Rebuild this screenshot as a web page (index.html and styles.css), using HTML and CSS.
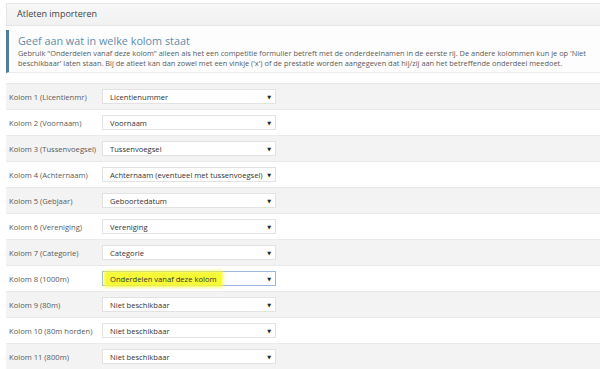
FILE: index.html
```html
<!DOCTYPE html>
<html lang="nl">
<head>
    <meta charset="UTF-8">
    <meta name="viewport" content="width=device-width, initial-scale=1.0">
    <title>Atleten importeren</title>
    <link rel="stylesheet" href="styles.css">
</head>
<body>
    <div class="panel">
        <div class="panel-heading">Atleten importeren</div>

        <div class="callout">
            <h4>Geef aan wat in welke kolom staat</h4>
            <p>Gebruik "Onderdelen vanaf deze kolom" alleen als het een competitie formulier betreft met de onderdeelnamen in de eerste rij. De andere kolommen kun je op 'Niet beschikbaar' laten staan. Bij de atleet kan dan zowel met een vinkje ('x') of de prestatie worden aangegeven dat hij/zij aan het betreffende onderdeel meedoet.</p>
        </div>

        <div class="columns">
            <div class="row">
                <label>Kolom 1 (Licentienmr)</label>
                <div class="select"><span>Licentienummer</span><span class="caret">&#9660;</span></div>
            </div>
            <div class="row">
                <label>Kolom 2 (Voornaam)</label>
                <div class="select"><span>Voornaam</span><span class="caret">&#9660;</span></div>
            </div>
            <div class="row">
                <label>Kolom 3 (Tussenvoegsel)</label>
                <div class="select"><span>Tussenvoegsel</span><span class="caret">&#9660;</span></div>
            </div>
            <div class="row">
                <label>Kolom 4 (Achternaam)</label>
                <div class="select"><span>Achternaam (eventueel met tussenvoegsel)</span><span class="caret">&#9660;</span></div>
            </div>
            <div class="row">
                <label>Kolom 5 (Gebjaar)</label>
                <div class="select"><span>Geboortedatum</span><span class="caret">&#9660;</span></div>
            </div>
            <div class="row">
                <label>Kolom 6 (Vereniging)</label>
                <div class="select"><span>Vereniging</span><span class="caret">&#9660;</span></div>
            </div>
            <div class="row">
                <label>Kolom 7 (Categorie)</label>
                <div class="select"><span>Categorie</span><span class="caret">&#9660;</span></div>
            </div>
            <div class="row">
                <label>Kolom 8 (1000m)</label>
                <div class="select focus"><span class="mark">Onderdelen vanaf deze kolom</span><span class="caret">&#9660;</span></div>
            </div>
            <div class="row">
                <label>Kolom 9 (80m)</label>
                <div class="select"><span>Niet beschikbaar</span><span class="caret">&#9660;</span></div>
            </div>
            <div class="row">
                <label>Kolom 10 (80m horden)</label>
                <div class="select"><span>Niet beschikbaar</span><span class="caret">&#9660;</span></div>
            </div>
            <div class="row">
                <label>Kolom 11 (800m)</label>
                <div class="select"><span>Niet beschikbaar</span><span class="caret">&#9660;</span></div>
            </div>
        </div>
    </div>
</body>
</html>
```

FILE: styles.css
```css
* {
    margin: 0;
    padding: 0;
    box-sizing: border-box;
    font-family: 'Open Sans', 'DejaVu Sans', sans-serif;
}

body {
    background: white;
    color: #555;
    overflow: hidden;
}

.panel {
    margin: 3px 0 0 6px;
}

.panel-heading {
    height: 23px;
    padding: 0 10px;
    line-height: 19px;
    font-size: 9px;
    color: #444;
    background: linear-gradient(#f7f7f7, #f1f1f1);
    border: 1px solid #e6e6e6;
    border-right: none;
}

.callout {
    margin-top: 4px;
    padding: 3px 10px 4px 9px;
    border-left: 3px solid #4d7c9c;
    border-bottom: 1px solid #ececec;
    background: #fdfdfd;
}

.callout h4 {
    font-size: 10.8px;
    font-weight: normal;
    color: #5f8cab;
    line-height: 15px;
}

.callout p {
    font-size: 7.4px;
    line-height: 10px;
    color: #5a5a5a;
}

.columns {
    margin-top: 10px;
}

.row {
    display: flex;
    align-items: center;
    height: 26px;
    padding-left: 3px;
    border-top: 1px solid #eaeaea;
}

.row:nth-child(odd) {
    background: #f3f3f3;
}

.row label {
    width: 93px;
    font-size: 7.6px;
    color: #5a5a5a;
}

.select {
    display: flex;
    align-items: center;
    justify-content: space-between;
    width: 174px;
    height: 15px;
    padding: 0 4px 0 7px;
    background: white;
    border: 1px solid #e2e2e2;
    font-size: 7.6px;
    color: #333;
}

.select.focus {
    border-color: #9cb8dd;
}

.mark {
    background: #f6f936;
    box-shadow: 0 0 3px 2px #f6f936;
    margin-left: -4px;
    padding: 1px 4px;
}

.caret {
    font-size: 5px;
    color: #222;
}
```
